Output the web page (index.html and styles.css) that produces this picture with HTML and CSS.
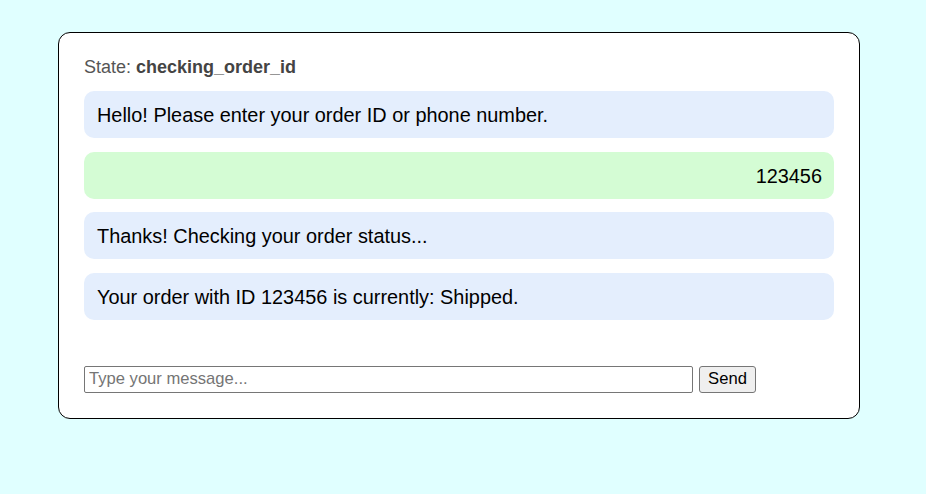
FILE: index.html
```html
<!DOCTYPE html>
<html lang="en">
<head>
<meta charset="utf-8">
<title>Order Bot</title>
<link rel="stylesheet" href="styles.css">
</head>
<body>
<div class="card">
  <div class="state">State: <b>checking_order_id</b></div>
  <div class="messages">
    <div class="msg bot">Hello! Please enter your order ID or phone number.</div>
    <div class="msg user">123456</div>
    <div class="msg bot">Thanks! Checking your order status...</div>
    <div class="msg bot">Your order with ID 123456 is currently: Shipped.</div>
  </div>
  <div class="composer">
    <input class="field" type="text" placeholder="Type your message...">
    <button class="send" type="button">Send</button>
  </div>
</div>
</body>
</html>
```

FILE: styles.css
```css
html, body {
  margin: 0;
  padding: 0;
  background: #e0ffff;
  font-family: "Liberation Sans", Arial, sans-serif;
}
body {
  padding: 32px 0 0 58px;
}
.card {
  box-sizing: border-box;
  width: 802px;
  height: 387px;
  background: #ffffff;
  border: 1px solid #000000;
  border-radius: 12px;
  padding: 24px 25px 25px;
}
.state {
  font-size: 18px;
  line-height: 21px;
  color: #555555;
  margin-bottom: 13px;
}
.state b {
  color: #444444;
}
.messages {
  display: flex;
  flex-direction: column;
  gap: 13.5px;
  margin-bottom: 46px;
}
.msg {
  font-size: 19.9px;
  line-height: 23px;
  padding: 13px 12px 11px 13px;
  border-radius: 10px;
  color: #000000;
}
.bot {
  background: #e4eefd;
}
.user {
  background: #d4fcd4;
  text-align: right;
}
.composer {
  display: flex;
  align-items: center;
  gap: 6px;
}
.field {
  box-sizing: border-box;
  width: 609px;
  height: 27px;
  margin: 0;
  padding: 2px 4px;
  border: 1px solid #767676;
  border-radius: 2px;
  font-family: "Liberation Sans", Arial, sans-serif;
  font-size: 16.6px;
  color: #000;
  background: #fff;
}
.field::placeholder {
  color: #757575;
}
.send {
  box-sizing: border-box;
  width: 57px;
  height: 27px;
  margin: 0;
  padding: 1px 6px;
  border: 1px solid #767676;
  border-radius: 3px;
  background: #efefef;
  font-family: "Liberation Sans", Arial, sans-serif;
  font-size: 16.6px;
  color: #000;
}
```
